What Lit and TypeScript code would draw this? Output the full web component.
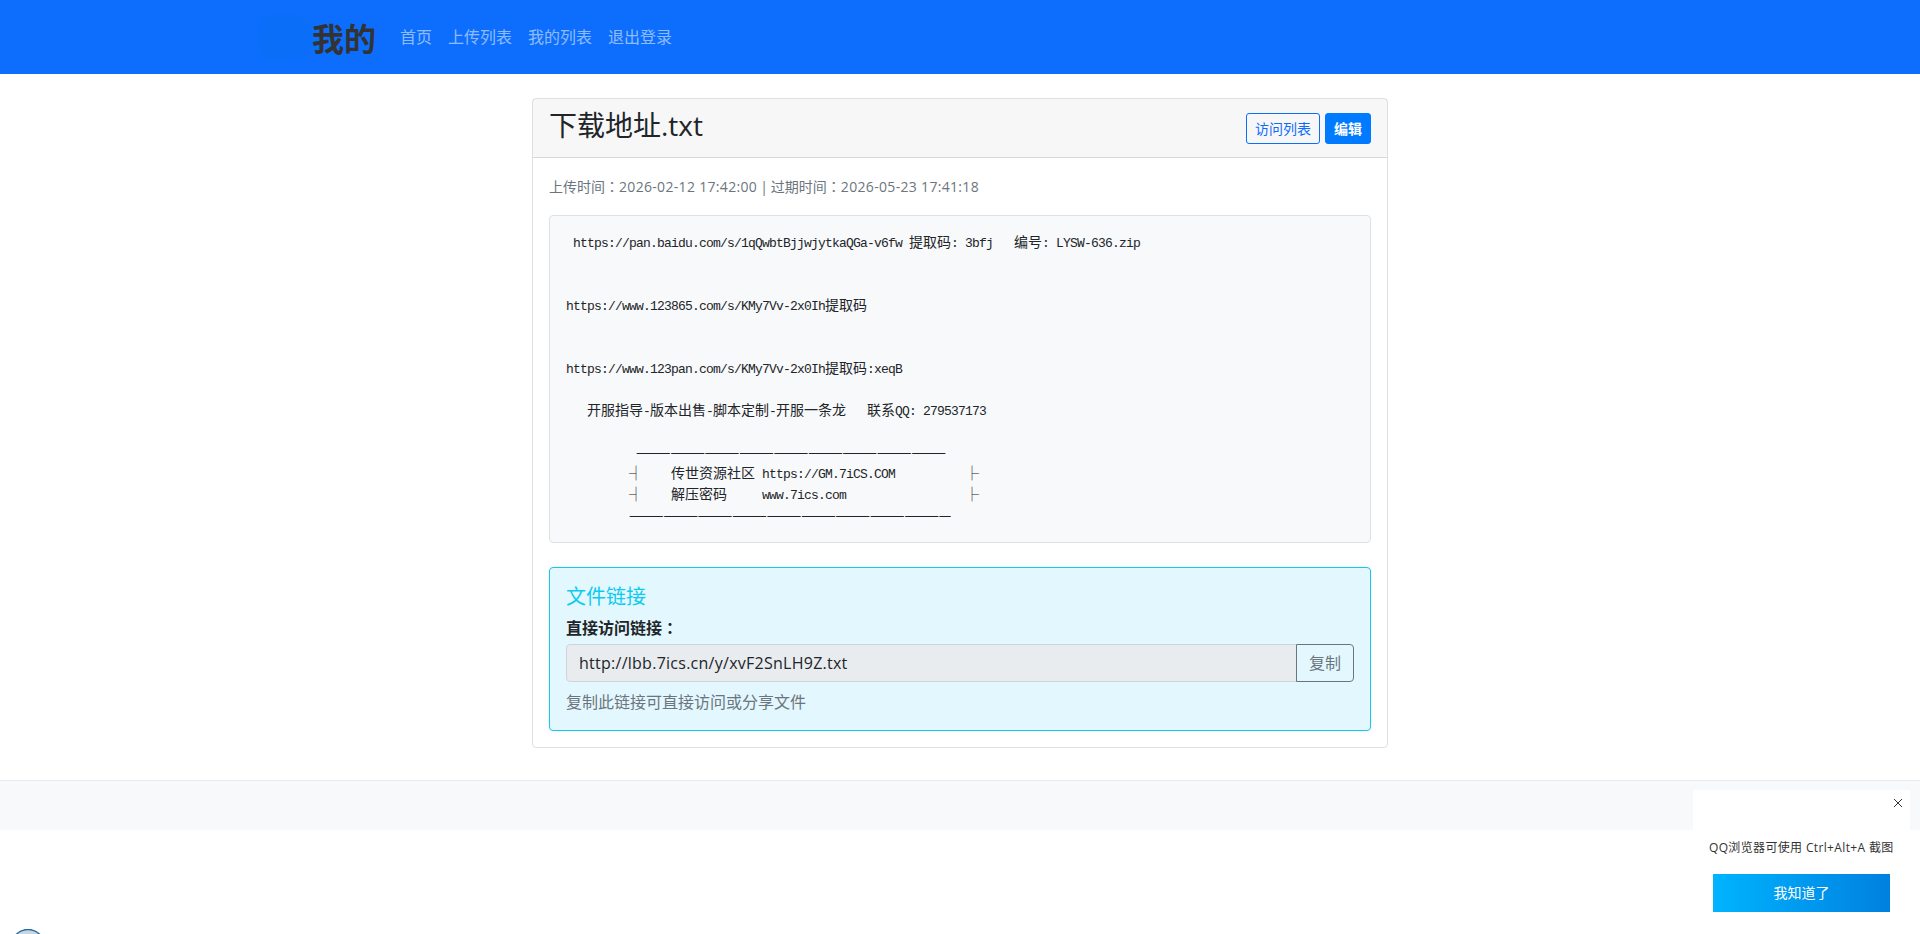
import { LitElement, html, css } from "lit";
import { customElement } from "lit/decorators.js";

const sp = (n: number) => " ".repeat(n);
const dash = (n: number) => "—".repeat(n);

@customElement("app-root")
export class AppRoot extends LitElement {
  static styles = css`
    :host { display: block; height: 934px; overflow: hidden; position: relative; background: #fff; color: #212529;
      font-family: "Open Sans", "Noto Sans CJK SC", sans-serif; font-size: 16px; line-height: 24px; }
    * { box-sizing: border-box; }
    .nav { height: 74px; background: #0d6efd; display: flex; align-items: center; padding-left: 258px; }
    .logo { width: 54px; height: 46px; flex: none; border-radius: 8px;
      background: radial-gradient(ellipse at center, #0a6ef8 0%, #0a6ef8 60%, #0d6efd 100%); }
    .brand { font-size: 32px; font-weight: 700; color: #333; line-height: 48px; margin-right: 8px; width: 72px; padding-top: 4px; }
    .link { color: rgba(255,255,255,.55); padding: 0 8px; }
    .card { width: 856px; margin: 24px auto 0; border: 1px solid rgba(0,0,0,.125); border-radius: 4px; }
    .head { display: flex; align-items: center; justify-content: space-between; height: 59px; padding: 0 16px;
      background: rgba(0,0,0,.03); border-bottom: 1px solid rgba(0,0,0,.125); }
    h3 { margin: -6px 0 0; font-size: 28px; font-weight: 400; line-height: 34px; }
    .btns { display: flex; gap: 5px; }
    .btn { height: 31px; padding: 0 8px; font-size: 14px; line-height: 29px; border: 1px solid #0d6efd; border-radius: 3px; color: #0d6efd; }
    .btn.solid { background: #007bff; border-color: #007bff; color: #fff; font-weight: 700; }
    .body { padding: 16px; }
    .meta { margin: 0 0 16px; }
    small { font-size: 14px; color: #6c757d; }
    .d { letter-spacing: .32px; }
    .sep { margin: 0 3px; }
    .colon { font-family: "Noto Sans CJK TC", sans-serif; }
    pre { margin: 0 0 24px; height: 328px; padding: 15px 16px; background: #f8f9fa; border: 1px solid #dee2e6; border-radius: 4px;
      font-family: "Noto Sans CJK SC", sans-serif; font-size: 14px; line-height: 21px; color: #212529; overflow: hidden; }
    pre b { font-family: "Liberation Mono", monospace; font-size: 13px; letter-spacing: -.8px; font-weight: 400; line-height: 0; }
    .alert { height: 164px; padding: 17px 16px 16px; background: #e3f8fe; border: 1px solid #0dcaf0; border-radius: 4px; }
    h5 { margin: 0 0 6px; font-size: 20px; font-weight: 400; line-height: 24px; color: #0dcaf0; }
    label { display: block; font-weight: 700; margin-bottom: 4px; }
    .group { display: flex; height: 38px; }
    .input { flex: 1; padding: 6px 12px; background: #e9ecef; border: 1px solid #ced4da; border-radius: 4px 0 0 4px; letter-spacing: .26px; }
    .copy { padding: 6px 12px; margin-left: -1px; border: 1px solid #6c757d; border-radius: 0 4px 4px 0; color: #6c757d; }
    .help { margin-top: 8px; color: #6c757d; }
    footer { margin-top: 32px; height: 50px; background: #f8f9fa; border-top: 1px solid #e9ecef; }
    .pop { position: absolute; left: 1693px; top: 790px; width: 217px; height: 144px; background: #fff; font-size: 12px; color: #333; }
    .close { position: absolute; left: 199px; top: 7px; width: 12px; height: 12px; }
    .tip { position: absolute; left: 16px; top: 46px; white-space: nowrap; line-height: 24px; letter-spacing: .35px; }
    .ok { position: absolute; left: 20px; top: 84px; width: 177px; height: 38px; background: linear-gradient(90deg, #00b4ff, #0080e0);
      color: #fff; font-size: 14px; line-height: 38px; text-align: center; }
    .globe { position: absolute; left: 10px; top: 929px; }
  `;

  render() {
    return html`
      <div class="nav">
        <div class="logo"></div>
        <div class="brand">我的</div>
        <span class="link">首页</span><span class="link">上传列表</span><span class="link">我的列表</span><span class="link">退出登录</span>
      </div>
      <div class="card">
        <div class="head">
          <h3>下载地址.txt</h3>
          <div class="btns"><span class="btn">访问列表</span><span class="btn solid">编辑</span></div>
        </div>
        <div class="body">
          <p class="meta"><small>上传时间<span class="colon">：</span><span class="d">2026-02-12 17:42:00</span><span class="sep">|</span>过期时间<span class="colon">：</span><span class="d">2026-05-23 17:41:18</span></small></p>
          <pre><b> https://pan.baidu.com/s/1qQwbtBjjwjytkaQGa-v6fw </b>提取码<b>: 3bfj   </b>编号<b>: LYSW-636.zip</b>


<b>https://www.123865.com/s/KMy7Vv-2x0Ih</b>提取码


<b>https://www.123pan.com/s/KMy7Vv-2x0Ih</b>提取码<b>:xeqB</b>

<b>   </b>开服指导<b>-</b>版本出售<b>-</b>脚本定制<b>-</b>开服一条龙<b>   </b>联系<b>QQ: 279537173</b>

<b>${sp(10)}</b>${dash(27)}
<b>${sp(9)}</b>┤<b>${sp(4)}</b>传世资源社区<b> https://GM.7iCS.COM${sp(10)}</b>├
<b>${sp(9)}</b>┤<b>${sp(4)}</b>解压密码<b>${sp(5)}www.7ics.com${sp(17)}</b>├
<b>${sp(9)}</b>${dash(28)}</pre>
          <div class="alert">
            <h5>文件链接</h5>
            <label>直接访问链接<span class="colon">：</span></label>
            <div class="group"><div class="input">http://lbb.7ics.cn/y/xvF2SnLH9Z.txt</div><div class="copy">复制</div></div>
            <div class="help">复制此链接可直接访问或分享文件</div>
          </div>
        </div>
      </div>
      <footer></footer>
      <div class="pop">
        <svg class="close" viewBox="0 0 12 12"><path d="M2 2l8 8M10 2l-8 8" stroke="#333" stroke-width="1" fill="none"/></svg>
        <div class="tip">QQ浏览器可使用 Ctrl+Alt+A 截图</div>
        <div class="ok">我知道了</div>
      </div>
      <svg class="globe" width="36" height="5" viewBox="0 0 36 5"><circle cx="18" cy="17" r="16.5" fill="#c5d6e4" stroke="#2a6a9e" stroke-width="1.5"/></svg>
    `;
  }
}
